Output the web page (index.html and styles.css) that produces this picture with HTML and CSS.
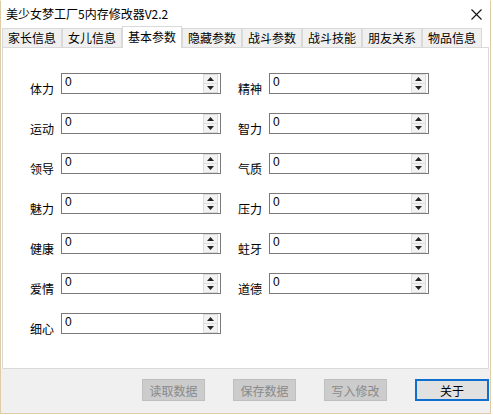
FILE: index.html
```html
<!DOCTYPE html>
<html lang="zh-Hans">
<head>
    <meta charset="UTF-8">
    <meta name="viewport" content="width=device-width, initial-scale=1.0">
    <title>美少女梦工厂5内存修改器V2.2</title>
    <link rel="stylesheet" href="styles.css">
</head>
<body>
    <div class="window">
        <div class="titlebar">
            <span class="title">美少女梦工厂5内存修改器V2.2</span>
            <span class="close">
                <svg width="11" height="11" viewBox="0 0 11 11"><path d="M0.5 0.5L10.5 10.5M10.5 0.5L0.5 10.5" stroke="#111" stroke-width="1.1" fill="none"/></svg>
            </span>
        </div>

        <div class="tabs">
            <div class="tab">家长信息</div>
            <div class="tab">女儿信息</div>
            <div class="tab active">基本参数</div>
            <div class="tab">隐藏参数</div>
            <div class="tab">战斗参数</div>
            <div class="tab">战斗技能</div>
            <div class="tab">朋友关系</div>
            <div class="tab">物品信息</div>
        </div>

        <div class="panel">
            <div class="fields" id="fields"></div>
        </div>

        <div class="footer">
            <button class="btn" disabled>读取数据</button>
            <button class="btn" disabled>保存数据</button>
            <button class="btn" disabled>写入修改</button>
            <button class="btn primary">关于</button>
        </div>
    </div>

    <script>
        const names = ['体力', '精神', '运动', '智力', '领导', '气质', '魅力', '压力', '健康', '蛀牙', '爱情', '道德', '细心'];
        const fields = document.getElementById('fields');
        const arrowUp = '<svg width="7" height="4" viewBox="0 0 7 4"><path d="M3.5 0L7 4H0z" fill="#222"/></svg>';
        const arrowDown = '<svg width="7" height="4" viewBox="0 0 7 4"><path d="M0 0H7L3.5 4z" fill="#222"/></svg>';

        names.forEach(function (name) {
            const field = document.createElement('div');
            field.className = 'field';
            field.innerHTML =
                '<span class="label">' + name + '</span>' +
                '<div class="spinbox">' +
                    '<span class="value">0</span>' +
                    '<span class="spin">' +
                        '<span class="half">' + arrowUp + '</span>' +
                        '<span class="half">' + arrowDown + '</span>' +
                    '</span>' +
                '</div>';
            fields.appendChild(field);
        });
    </script>
</body>
</html>
```

FILE: styles.css
```css
* {
    box-sizing: border-box;
}
body {
    margin: 0;
    background: #ffffff;
    font-family: "Noto Sans CJK SC", "Microsoft YaHei", sans-serif;
    font-size: 12px;
    color: #000;
}
.window {
    width: 491px;
    height: 414px;
    border: 1px solid #dccda8;
    border-top-color: #ffffff;
    background: #ffffff;
    display: flex;
    flex-direction: column;
}
.titlebar {
    height: 25px;
    display: flex;
    align-items: center;
    justify-content: space-between;
    padding: 0 8px 0 5px;
}
.title {
    line-height: 16px;
}
.close {
    display: flex;
    margin-top: 1px;
}
.tabs {
    height: 21px;
    display: flex;
    align-items: flex-end;
    padding-left: 1px;
    position: relative;
    z-index: 1;
}
.tab {
    width: 60px;
    height: 19px;
    line-height: 18px;
    text-align: center;
    background: #f0f0f0;
    border: 1px solid #d9d9d9;
    border-bottom: none;
}
.tab.active {
    height: 22px;
    line-height: 20px;
    margin-bottom: -1px;
    background: #ffffff;
}
.panel {
    height: 322px;
    margin: 0 1px 0 1px;
    background: #ffffff;
    border: 1px solid #d9d9d9;
    padding: 25px 0 0 27px;
}
.fields {
    display: grid;
    grid-template-columns: 208px 208px;
    row-gap: 19px;
}
.field {
    display: flex;
    align-items: flex-end;
}
.label {
    width: 31px;
    line-height: 14px;
    margin-bottom: -2px;
}
.spinbox {
    width: 160px;
    height: 21px;
    border: 1px solid #7a7a7a;
    background: #ffffff;
    display: flex;
}
.value {
    flex: 1;
    padding: 1px 3px;
    font-family: "Liberation Sans", Arial, sans-serif;
    font-size: 12px;
    line-height: 14px;
}
.spin {
    width: 15px;
    margin: 0 2px 0 0;
    border: 1px solid #dcdcdc;
    background: #f3f3f3;
    display: flex;
    flex-direction: column;
}
.half {
    flex: 1;
    display: flex;
    align-items: center;
    justify-content: center;
}
.half + .half {
    border-top: 1px solid #dcdcdc;
}
.footer {
    flex: 1;
    background: #f0f0f0;
    display: flex;
    justify-content: flex-end;
    align-items: flex-start;
    gap: 28px;
    padding: 10px 1px 0 0;
}
.btn {
    width: 63px;
    height: 22px;
    padding: 0;
    font-family: "Noto Sans CJK SC", "Microsoft YaHei", sans-serif;
    font-size: 12px;
    background: #cccccc;
    border: 1px solid #bfbfbf;
    color: #8a8a8a;
}
.btn.primary {
    width: 74px;
    background: #e1e1e1;
    border: 2px solid #0f6fcf;
    color: #000;
}
```
